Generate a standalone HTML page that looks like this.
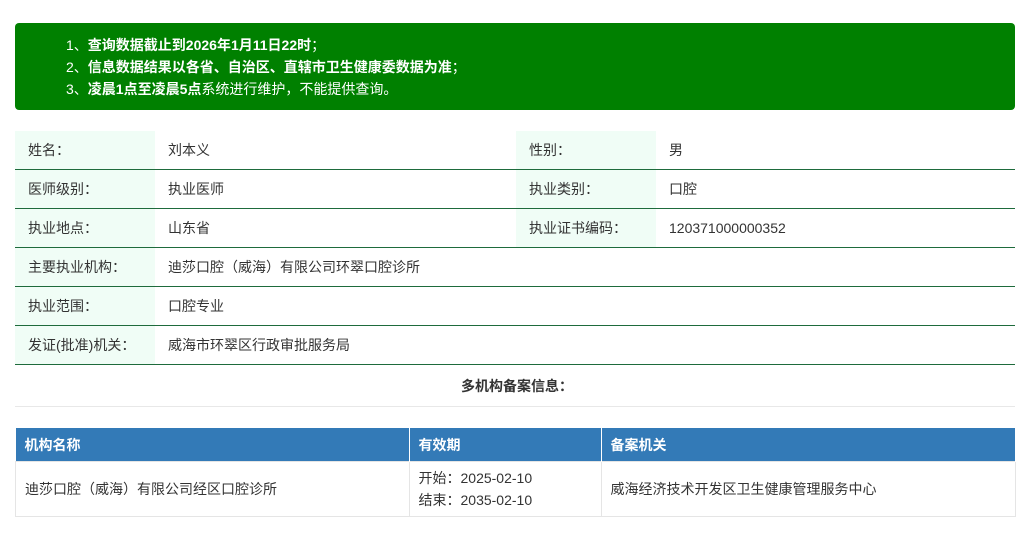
<!DOCTYPE html>
<html><head><meta charset="utf-8"><style>
body{margin:0;background:#fff;font-family:"Liberation Sans","Noto Sans CJK SC",sans-serif;font-size:14px;color:#333;width:1034px;height:560px;overflow:hidden;position:relative}
.notice{position:absolute;left:15px;top:23px;width:1000px;height:87px;background:#008000;border-radius:4px;color:#fff;font-size:14px}
.notice div{position:absolute;left:51px;line-height:20px}
.info{position:absolute;left:15px;top:131px;width:1000px;border-collapse:collapse}
.info td{height:38px;padding:0 0 0 13px;border-bottom:1px solid #1e6b3c;vertical-align:middle}
.info td.l{background:#f0fdf6;width:127px}
.info td.v{width:348px}
.t{position:absolute;left:0;width:1034px;top:376px;text-align:center;font-weight:bold}
.hr{position:absolute;left:15px;top:406px;width:1000px;border-top:1px solid #e8e8e8}
.m{position:absolute;left:15px;top:428px;width:1001px;border-collapse:collapse}
.m th{background:#337ab7;color:#fff;text-align:left;height:33px;padding:0 0 0 9px;border-right:1px solid #fff;font-weight:bold}
.m td{border:1px solid #e5e5e5;height:54px;padding:0 0 0 9px;line-height:22px}
</style></head><body>
<div class="notice">
<div style="top:12px">1、<b>查询数据截止到2026年1月11日22时</b>；</div>
<div style="top:34px">2、<b>信息数据结果以各省、自治区、直辖市卫生健康委数据为准</b>；</div>
<div style="top:56px">3、<b>凌晨1点至凌晨5点</b>系统进行维护，不能提供查询。</div>
</div>
<table class="info">
<tr><td class="l">姓名：</td><td class="v">刘本义</td><td class="l">性别：</td><td>男</td></tr>
<tr><td class="l">医师级别：</td><td class="v">执业医师</td><td class="l">执业类别：</td><td>口腔</td></tr>
<tr><td class="l">执业地点：</td><td class="v">山东省</td><td class="l">执业证书编码：</td><td>120371000000352</td></tr>
<tr><td class="l">主要执业机构：</td><td colspan="3">迪莎口腔（威海）有限公司环翠口腔诊所</td></tr>
<tr><td class="l">执业范围：</td><td colspan="3">口腔专业</td></tr>
<tr><td class="l">发证(批准)机关：</td><td colspan="3">威海市环翠区行政审批服务局</td></tr>
</table>
<div class="t">多机构备案信息：</div>
<div class="hr"></div>
<table class="m">
<tr><th style="width:384px">机构名称</th><th style="width:182px">有效期</th><th>备案机关</th></tr>
<tr><td>迪莎口腔（威海）有限公司经区口腔诊所</td><td>开始：2025-02-10<br>结束：2035-02-10</td><td>威海经济技术开发区卫生健康管理服务中心</td></tr>
</table>
</body></html>
